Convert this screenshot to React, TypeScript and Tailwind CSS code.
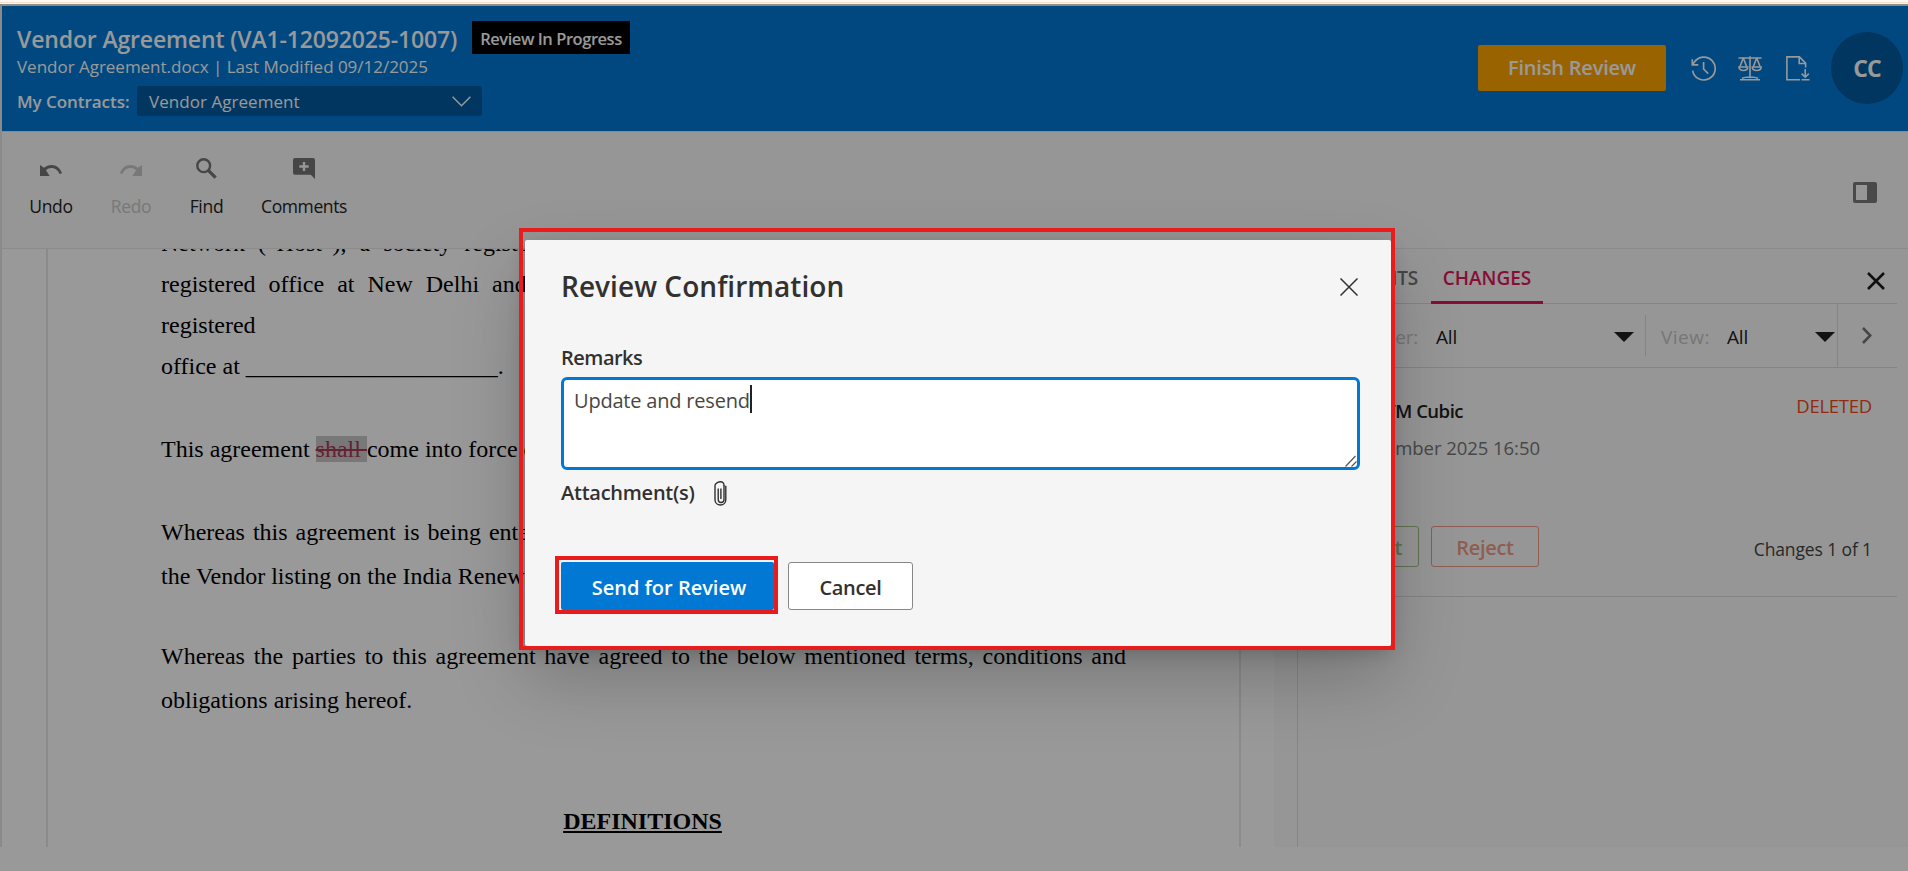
import type { ReactNode } from "react";

function UndoIcon({ flip = false }: { flip?: boolean }) {
  return (
    <svg width="22" height="11" viewBox="0 0 22 11" className={flip ? "-scale-x-100" : ""} fill="currentColor">
      <path d="M11.5 0C8.6 0 6 1.1 4 2.8L0 0v11h9.6L6 5.3C7.5 4 9.3 3.1 11.5 3.1c3.7 0 6.8 2.400 8 6L22 8.300C20.500 3.500 16.400 0 11.500 0z" />
    </svg>
  );
}

function SearchIcon() {
  return (
    <svg width="21" height="21" viewBox="0 0 21 21" fill="none" stroke="currentColor">
      <circle cx="7.700" cy="7.700" r="6.400" strokeWidth="2.400" />
      <path d="M12.300 12.300l7.300 7.300" strokeWidth="3.200" />
    </svg>
  );
}

function CommentAddIcon() {
  return (
    <svg width="22" height="21" viewBox="0 0 22 21" fill="currentColor" fillRule="evenodd">
      <path d="M2 0h18q2 0 2 2v19l-4.200-4.200H2q-2 0-2-2V2Q0 0 2 0zM9.800 4v3.300H6.300v2.400h3.500V13h2.400V9.700h3.500V7.300h-3.500V4z" />
    </svg>
  );
}

function HistoryIcon() {
  return (
    <svg width="26" height="25" viewBox="0 0 26 25" fill="none" stroke="currentColor" strokeWidth="1.700">
      <path d="M1.600 14.600A11.400 11.400 0 1 0 3.200 6.400L1.300 8.600" />
      <path d="M1.300 3.200v5.600h6" />
      <path d="M12.600 6v7l4.600 4.600" />
    </svg>
  );
}

function ScalesIcon() {
  return (
    <svg width="24" height="25" viewBox="0 0 24 25" fill="none" stroke="currentColor" strokeWidth="1.600">
      <path d="M.5 2h23M12 .3v22M2 23.700h20M4 22.500c3-2 13-2 16 0" />
      <path d="M5.300 2L1.900 10.800M5.300 2l3.400 8.800M18.700 2l-3.400 8.800M18.700 2l3.400 8.800" />
      <path d="M.9 11h8.800c0 4.700-8.800 4.700-8.800 0zM14.300 11h8.800c0 4.700-8.800 4.700-8.800 0z" />
    </svg>
  );
}

function FileDownIcon() {
  return (
    <svg width="24" height="25" viewBox="0 0 24 25" fill="none" stroke="currentColor" strokeWidth="1.600">
      <path d="M14 23.700H.9V.9h12.500l6.200 6.200v4.400" />
      <path d="M13.200.9v6.600h6.400" />
      <path d="M19.200 13v8M15.600 17.600l3.600 3.600 3.600-3.600M15.500 23.700h8" />
    </svg>
  );
}

function Tool({ icon, label, className }: { icon: ReactNode; label: string; className: string }) {
  return (
    <div className={`flex flex-col items-center ${className}`}>
      <div className="flex h-6 items-center">{icon}</div>
      <div className="mt-[14px] text-[17.500px] leading-6">{label}</div>
    </div>
  );
}

function Caret() {
  return (
    <svg width="20" height="10" viewBox="0 0 20 10" className="mt-[2px] text-[#212121]">
      <path d="M0 0h20L10 10z" fill="currentColor" />
    </svg>
  );
}

function Header() {
  return (
    <header className="flex h-[125px] shrink-0 justify-between bg-[#0078d4] pr-[5px] pl-[15px] text-white">
      <div className="pt-[15px]">
        <div className="flex h-[33px]">
          <h1 className="w-[455px] text-[23px] leading-[36px] font-semibold tracking-[-0.150px]">
            Vendor Agreement (VA1-12092025-1007)
          </h1>
          <span className="w-[158px] bg-black text-center text-[16.500px] leading-[36px] font-semibold tracking-[-0.450px]">
            Review In Progress
          </span>
        </div>
        <p className="text-[17px] leading-[26px] tracking-[-0.020px]">Vendor Agreement.docx | Last Modified 09/12/2025</p>
        <div className="mt-[6px] flex h-[30px] items-center">
          <span className="w-[120px] text-[17px] leading-[31px] font-semibold tracking-[-0.050px]">My Contracts:</span>
          <div className="flex h-[30px] w-[345px] items-center justify-between rounded-[3px] bg-[#005a9e] pr-[11px] pl-[12px]">
            <span className="text-[17px] leading-[29px] tracking-[0.050px]">Vendor Agreement</span>
            <svg width="19" height="11" viewBox="0 0 19 11" fill="none" stroke="currentColor" strokeWidth="1.500">
              <path d="M.6.8l8.900 8.900L18.400.8" />
            </svg>
          </div>
        </div>
      </div>
      <div className="flex h-[124px] items-center">
        <button className="h-[46px] w-[188px] rounded-[2px] bg-[#ffa500] text-[20px] font-semibold tracking-[-0.200px]">
          Finish Review
        </button>
        <div className="ml-[25px] flex">
          <HistoryIcon />
          <div className="ml-[21px] flex gap-[24px]">
            <ScalesIcon />
            <FileDownIcon />
          </div>
        </div>
        <div className="ml-[21px] flex size-[72px] items-center justify-center rounded-full bg-[#005a9e] text-[23px] font-bold tracking-[-1px]">
          CC
        </div>
      </div>
    </header>
  );
}

function Toolbar() {
  return (
    <div className="flex h-[118px] shrink-0 justify-between border-t border-b border-t-[#e4e4e4] border-b-[#e8e8e8] bg-[#fafafa] pr-[31px] pl-[9px] text-[#222]">
      <div className="flex pt-[24px]">
        <Tool className="w-[80px] tracking-[-0.300px]" label="Undo" icon={<span className="pt-1 text-[#757575]"><UndoIcon /></span>} />
        <Tool className="w-[80px] tracking-[-0.300px] text-[#c9c9c9]" label="Redo" icon={<span className="pt-1"><UndoIcon flip /></span>} />
        <Tool className="w-[71px] tracking-[-0.300px]" label="Find" icon={<span className="text-[#757575]"><SearchIcon /></span>} />
        <Tool className="w-[124px] tracking-[-0.400px]" label="Comments" icon={<span className="text-[#757575]"><CommentAddIcon /></span>} />
      </div>
      <svg width="24" height="21" viewBox="0 0 24 21" className="mt-[50px] text-[#7a7a7a]" fill="currentColor" fillRule="evenodd">
        <path d="M2 0h20q2 0 2 2v17q0 2-2 2H2q-2 0-2-2V2Q0 0 2 0zM3 3v15h11V3z" />
      </svg>
    </div>
  );
}

function Document() {
  return (
    <div className="w-[1272px] shrink-0 overflow-hidden bg-white pl-[44px]">
      <div className="h-full w-[1195px] overflow-hidden border-x-2 border-[#e8e8e8] pl-[113px] text-black">
        <div className="-mt-[26.500px] w-[965px] font-['Liberation_Serif',serif] text-[24px] leading-[41.330px] whitespace-nowrap">
          <p className="[word-spacing:7px]">Network (“Host”), a society registered</p>
          <p className="[word-spacing:7px]">registered office at New Delhi and</p>
          <p>registered</p>
          <p>office at _____________________.</p>
          <p className="mt-[41.330px]">
            This agreement <span className="bg-[#c8c8c8] text-[#a83a56] line-through">shall </span>come into force on the date
          </p>
          <p className="mt-[41.330px] [word-spacing:2px]">Whereas this agreement is being entered into</p>
          <p className="mt-[2px] leading-[43.700px]">the Vendor listing on the India Renewable</p>
          <p className="mt-[36.300px] leading-[43.700px] [text-align-last:justify]">
            Whereas the parties to this agreement have agreed to the below mentioned terms, conditions and
          </p>
          <p className="leading-[43.700px]">obligations arising hereof.</p>
          <p className="mt-[77.300px] pr-[2px] text-center leading-[43.700px] font-bold underline">DEFINITIONS</p>
        </div>
      </div>
    </div>
  );
}

function ChangesPanel() {
  return (
    <div className="flex flex-1 bg-[#fafafa] pl-[23px]">
      <aside className="flex-1 border-l border-[#e0e0e0] pr-[11px]">
        <div className="flex h-[55px] border-b border-[#dcdcdc] text-[19px] leading-[58px] font-semibold">
          <div className="flex w-[133px] justify-end pr-[13px] tracking-[-0.200px] text-[#757575]">COMMENTS</div>
          <div className="h-[55px] w-[112px] border-b-[3px] border-[#e3165b] text-center text-[#e3165b]">CHANGES</div>
          <svg width="18" height="18" viewBox="0 0 18 18" className="mt-[23px] ml-auto mr-[12px] text-[#1c1c1c]" fill="none" stroke="currentColor" strokeWidth="2.600">
            <path d="M1 1l16 16M17 1L1 17" />
          </svg>
        </div>
        <div className="flex h-[64px] items-center border-b border-[#dcdcdc] text-[19px] leading-[28px] tracking-[-0.200px] text-[#212121]">
          <div className="w-[120px] pt-[3px] text-right text-[#c6c6c6]">User:</div>
          <div className="ml-[18px] flex w-[198px] items-center justify-between">
            <span className="pt-[3px]">All</span> <Caret />
          </div>
          <div className="ml-[11px] h-[41px] w-px bg-[#dcdcdc]" />
          <div className="ml-[15px] w-[66px] pt-[3px] tracking-[0.500px] text-[#c6c6c6]">View:</div>
          <div className="flex w-[108px] items-center justify-between">
            <span className="pt-[3px]">All</span> <Caret />
          </div>
          <div className="ml-[2px] h-full w-px bg-[#dcdcdc]" />
          <svg width="10" height="17" viewBox="0 0 10 17" className="ml-[24px] text-[#757575]" fill="none" stroke="currentColor" strokeWidth="2.600">
            <path d="M1 1l7.300 7.500L1 16" />
          </svg>
        </div>
        <div className="flex h-[229px] flex-col border-b border-[#dcdcdc] pr-[25px] text-[18.500px]">
          <div className="mt-[24px] flex justify-between leading-7">
            <span className="mt-[5px] w-[165px] text-right font-semibold tracking-[-0.500px] text-[#212121]">MTM Cubic</span>
            <span className="tracking-[-0.250px] text-[#f0491e]">DELETED</span>
          </div>
          <div className="mt-[7px] w-[242px] text-right text-[18.500px] leading-8 tracking-[-0.050px] text-[#777]">09 December 2025 16:50</div>
          <div className="mt-[62px] flex items-center text-[20px] font-semibold tracking-[-0.300px]">
            <div className="ml-[12px] flex h-[41px] w-[109px] items-center justify-end rounded-[3px] border border-[#a0c088] pt-[3px] pr-[16px] text-[#a0c088]">Accept</div>
            <div className="ml-[12px] flex h-[41px] w-[108px] items-center justify-center rounded-[3px] border border-[#ee9c88] pt-[3px] text-[#ee9c88]">Reject</div>
            <div className="ml-auto pt-[6px] text-[17.500px] font-normal tracking-[-0.120px] text-[#444]">Changes 1 of 1</div>
          </div>
        </div>
      </aside>
    </div>
  );
}

function ReviewDialog() {
  return (
    <div className="absolute top-[240px] left-[525px] h-[406px] w-[866px] rounded-[2px] bg-[#f5f5f5] px-[36px] pt-[28px] text-[20px] leading-7 text-[#323130] shadow-[0_32px_72px_rgba(0,0,0,0.22),0_6px_18px_rgba(0,0,0,0.18)]">
      <div className="flex justify-between">
        <h2 className="text-[28px] leading-9 font-semibold tracking-[0.050px]">Review Confirmation</h2>
        <svg width="18" height="18" viewBox="0 0 18 18" className="mt-[10px] mr-[-3px]" fill="none" stroke="currentColor" strokeWidth="1.500">
          <path d="M.5.5l17 17M17.500.5l-17 17" />
        </svg>
      </div>
      <div className="mt-[40px] font-semibold tracking-[-0.500px]">Remarks</div>
      <div className="relative mt-[5px] flex h-[93px] w-[799px] rounded-[6px] border-[3px] border-[#0078d4] bg-white pt-[5px] pl-[10px] text-[#484644]">
        <span className="pt-[2px] tracking-[-0.200px]">Update and resend</span>
        <span className="h-7 w-[2px] bg-[#222]" />
        <svg width="12" height="12" viewBox="0 0 12 12" className="absolute right-0 bottom-0" fill="none" stroke="#555" strokeWidth="1.200">
          <path d="M.5 11.500l10-10.500M6.500 11.500l5-5" />
        </svg>
      </div>
      <div className="mt-[9px] flex items-center font-semibold tracking-[-0.250px]">
        <span className="w-[153px]">Attachment(s)</span>
        <svg width="13" height="25" viewBox="0 0 13 25" fill="none" stroke="currentColor" strokeWidth="1.400">
          <path d="M10 4.500v-.3C10 2 8.600.8 6.500.8S1 2.200 1 4.500v14.300C1 22 3.400 24 6.400 24s5.400-2 5.400-5.200V4.800" />
          <path d="M10 4v14.500c0 2-1.400 3-3 3s-2.800-1-2.800-3V7.500M6.900 7.500V18" />
        </svg>
      </div>
      <div className="mt-[55px] flex gap-[14px]">
        <div className="relative">
          <button className="h-[48px] w-[213px] rounded-[2px] bg-[#0078d4] pt-[3px] pl-[3px] font-semibold text-white">Send for Review</button>
          <div className="absolute top-[-6px] left-[-6px] h-[58px] w-[223px] border-4 border-[#e81c1c]" />
        </div>
        <button className="h-[48px] w-[125px] rounded-[3px] border border-[#8a8886] bg-white pt-[3px] font-semibold tracking-[-0.300px]">Cancel</button>
      </div>
    </div>
  );
}

export default function App() {
  return (
    <div className="relative flex h-[871px] w-[1908px] flex-col overflow-hidden bg-white font-['Open_Sans',sans-serif] whitespace-nowrap">
      <div className="flex h-[4px] shrink-0 flex-col justify-center bg-[#fff8f1]">
        <div className="mt-[1px] h-px bg-[#f5dfcd]" />
      </div>
      <div className="flex h-[843px] shrink-0 flex-col border-t-2 border-l-2 border-t-[#ececec] border-l-[#e6e6e6]">
        <Header />
        <Toolbar />
        <div className="flex min-h-0 flex-1">
          <Document />
          <ChangesPanel />
        </div>
      </div>
      <div className="absolute inset-x-0 top-[4px] bottom-0 bg-black/40" />
      <ReviewDialog />
      <div className="absolute top-[228px] left-[519px] h-[422px] w-[876px] border-[4.500px] border-[#e81c1c]" />
    </div>
  );
}
